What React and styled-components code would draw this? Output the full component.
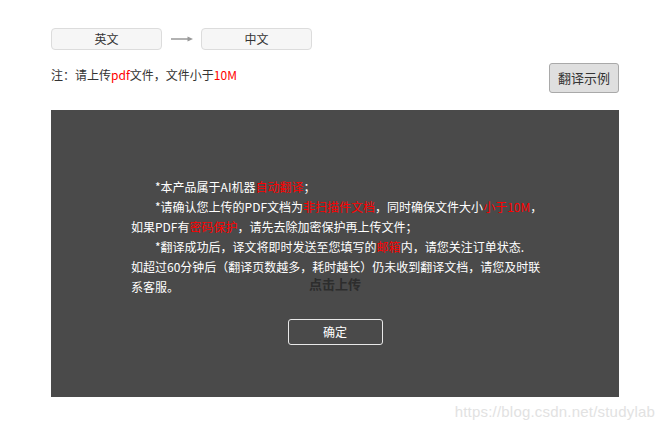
import React from 'react';
import styled, { createGlobalStyle } from 'styled-components';

const GlobalStyle = createGlobalStyle`
    body {
        margin: 0;
        background: #fff;
        font-family: "Noto Sans CJK SC", "Liberation Sans", sans-serif;
    }
`;

const App = () => {
    return (
        <Page>
            <GlobalStyle />
            <LangRow>
                <LangButton>英文</LangButton>
                <Arrow width="22" height="8" viewBox="0 0 22 8">
                    <line x1="0" y1="4" x2="18" y2="4" stroke="#999" strokeWidth="1.5" />
                    <path d="M16.5 1.5 L22 4 L16.5 6.5 Z" fill="#999" />
                </Arrow>
                <LangButton>中文</LangButton>
            </LangRow>
            <NoteRow>
                <Note>
                    注：请上传<Red>pdf</Red>文件，文件小于<Red>10M</Red>
                </Note>
                <SampleButton>翻译示例</SampleButton>
            </NoteRow>
            <UploadArea>
                <UploadHint>点击上传</UploadHint>
                <Overlay>
                    <Notice>
                        <Para>*本产品属于AI机器<Red>自动翻译</Red>；</Para>
                        <Para>
                            *请确认您上传的PDF文档为<Red>非扫描件文档</Red>，同时确保文件大小<Red>小于10M</Red>，<br />
                            如果PDF有<Red>密码保护</Red>，请先去除加密保护再上传文件；
                        </Para>
                        <Para>
                            *翻译成功后，译文将即时发送至您填写的<Red>邮箱</Red>内，请您关注订单状态.<br />
                            如超过60分钟后（翻译页数越多，耗时越长）仍未收到翻译文档，请您及时联<br />
                            系客服。
                        </Para>
                    </Notice>
                    <ConfirmButton>确定</ConfirmButton>
                </Overlay>
            </UploadArea>
            <Watermark>https://blog.csdn.net/studylab</Watermark>
        </Page>
    );
};

export default App;

const Page = styled.div`
    width: 665px;
    padding-top: 28px;
`;
const LangRow = styled.div`
    display: flex;
    align-items: center;
    padding-left: 51px;
    gap: 8px;
`;
const LangButton = styled.div`
    width: 109px;
    height: 20px;
    line-height: 20px;
    border: 1px solid #dcdcdc;
    border-radius: 4px;
    background: #f6f6f6;
    text-align: center;
    font-size: 12px;
    color: #333;
`;
const Arrow = styled.svg`
    display: block;
    margin-left: 1px;
`;
const NoteRow = styled.div`
    display: flex;
    align-items: center;
    justify-content: space-between;
    width: 568px;
    margin: 13px 0 0 51px;
`;
const Note = styled.div`
    font-size: 12px;
    color: #333;
    padding-bottom: 7px;
`;
const Red = styled.span`
    color: #f00;
`;
const SampleButton = styled.div`
    width: 68px;
    height: 28px;
    line-height: 28px;
    border: 1px solid #a9a9a9;
    border-radius: 3px;
    background: #dfdfdf;
    text-align: center;
    font-size: 13px;
    color: #333;
`;
const UploadArea = styled.div`
    position: relative;
    width: 568px;
    height: 287px;
    margin: 17px 0 0 51px;
    background: #fff;
    display: flex;
    justify-content: center;
`;
const UploadHint = styled.div`
    padding: 164px 0 0 0;
    font-size: 13px;
    font-weight: bold;
    color: #9a9a9a;
`;
const Overlay = styled.div`
    position: absolute;
    inset: 0;
    background: rgba(0, 0, 0, 0.71);
    display: flex;
    flex-direction: column;
    align-items: center;
    padding-top: 67px;
    box-sizing: border-box;
`;
const Notice = styled.div`
    width: 412px;
    margin-left: 4px;
    color: #fff;
    font-size: 12px;
    line-height: 20px;
    white-space: nowrap;
`;
const Para = styled.p`
    margin: 0;
    text-indent: 24px;
`;
const ConfirmButton = styled.div`
    margin-top: 22px;
    width: 93px;
    height: 24px;
    line-height: 24px;
    border: 1px solid #e8e8e8;
    border-radius: 3px;
    text-align: center;
    font-size: 12px;
    color: #fff;
`;
const Watermark = styled.div`
    margin-top: 6px;
    padding-right: 10px;
    text-align: right;
    font-family: "Liberation Sans", Arial, sans-serif;
    font-size: 15px;
    letter-spacing: 0.2px;
    line-height: 18px;
    color: #e2e2e2;
`;
